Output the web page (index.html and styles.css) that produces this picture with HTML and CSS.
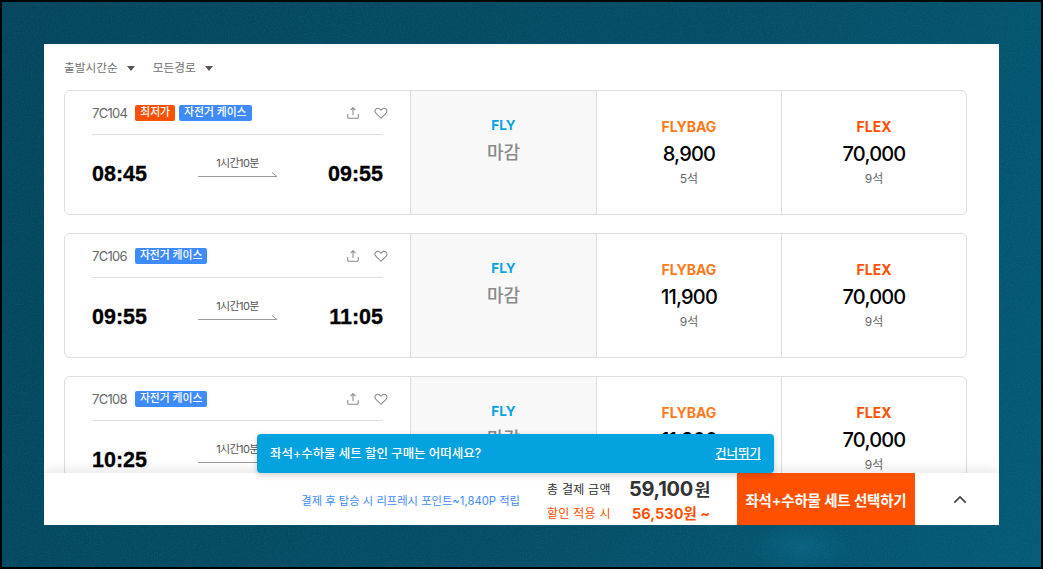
FILE: index.html
```html
<!DOCTYPE html>
<html lang="ko">
<head>
<meta charset="utf-8">
<title>항공편 선택</title>
<link rel="stylesheet" href="styles.css">
</head>
<body>
<div class="desktop">
  <svg class="texture" width="1043" height="569"><filter id="grain"><feTurbulence type="fractalNoise" baseFrequency="0.7 0.9" numOctaves="2" seed="4"/><feColorMatrix values="0 0 0 0 0.1  0 0 0 0 0.5  0 0 0 0 0.65  0 0 0 1.400 -0.55"/></filter><rect width="1043" height="569" filter="url(#grain)"/></svg>
  <main class="modal">
    <div class="filters">
      <span class="filter">출발시간순<i class="caret"></i></span>
      <span class="filter">모든경로<i class="caret"></i></span>
    </div>
    <div class="list">
      <article class="card">
        <section class="info">
          <div class="info-top">
            <span class="flight-no">7C104</span>
            <span class="tag tag-low">최저가</span>
            <span class="tag tag-bike">자전거 케이스</span>
            <span class="actions">
              <svg class="icon" viewBox="0 0 16 16"><path d="M8 10.5V2.200M5.200 4.800 8 2l2.800 2.800M2 9v4.200c0 .5.3.8.8.8h10.400c.5 0 .8-.3.8-.8V9"/></svg>
              <svg class="icon" viewBox="0 0 16 16"><path d="M8 14 2.300 8.300C.9 6.900.9 4.800 2.200 3.500c1.300-1.200 3.300-1.100 4.600.2L8 4.900l1.200-1.200c1.300-1.300 3.300-1.400 4.600-.2 1.300 1.300 1.300 3.400-.1 4.800L8 14Z"/></svg>
            </span>
          </div>
          <div class="times">
            <strong class="time">08:45</strong>
            <div class="route"><span class="duration">1시간10분</span><svg class="arrow" viewBox="0 0 80 5"><path d="M0 4.500H79L74 .5"/></svg></div>
            <strong class="time time-end">09:55</strong>
          </div>
        </section>
        <section class="fare fare-closed"><b class="fare-name name-fly">FLY</b><span class="closed">마감</span></section>
        <section class="fare"><b class="fare-name name-bag">FLYBAG</b><span class="price">8,900</span><span class="seats">5석</span></section>
        <section class="fare"><b class="fare-name name-flex">FLEX</b><span class="price">70,000</span><span class="seats">9석</span></section>
      </article>

      <article class="card">
        <section class="info">
          <div class="info-top">
            <span class="flight-no">7C106</span>
            <span class="tag tag-bike">자전거 케이스</span>
            <span class="actions">
              <svg class="icon" viewBox="0 0 16 16"><path d="M8 10.5V2.200M5.200 4.800 8 2l2.800 2.800M2 9v4.200c0 .5.3.8.8.8h10.400c.5 0 .8-.3.8-.8V9"/></svg>
              <svg class="icon" viewBox="0 0 16 16"><path d="M8 14 2.300 8.300C.9 6.900.9 4.800 2.200 3.500c1.300-1.200 3.300-1.100 4.600.2L8 4.900l1.200-1.200c1.300-1.300 3.300-1.400 4.600-.2 1.300 1.300 1.300 3.400-.1 4.800L8 14Z"/></svg>
            </span>
          </div>
          <div class="times">
            <strong class="time">09:55</strong>
            <div class="route"><span class="duration">1시간10분</span><svg class="arrow" viewBox="0 0 80 5"><path d="M0 4.500H79L74 .5"/></svg></div>
            <strong class="time time-end">11:05</strong>
          </div>
        </section>
        <section class="fare fare-closed"><b class="fare-name name-fly">FLY</b><span class="closed">마감</span></section>
        <section class="fare"><b class="fare-name name-bag">FLYBAG</b><span class="price">11,900</span><span class="seats">9석</span></section>
        <section class="fare"><b class="fare-name name-flex">FLEX</b><span class="price">70,000</span><span class="seats">9석</span></section>
      </article>

      <article class="card">
        <section class="info">
          <div class="info-top">
            <span class="flight-no">7C108</span>
            <span class="tag tag-bike">자전거 케이스</span>
            <span class="actions">
              <svg class="icon" viewBox="0 0 16 16"><path d="M8 10.5V2.200M5.200 4.800 8 2l2.800 2.800M2 9v4.200c0 .5.3.8.8.8h10.400c.5 0 .8-.3.8-.8V9"/></svg>
              <svg class="icon" viewBox="0 0 16 16"><path d="M8 14 2.300 8.300C.9 6.900.9 4.800 2.200 3.500c1.300-1.200 3.300-1.100 4.600.2L8 4.900l1.200-1.200c1.300-1.300 3.300-1.400 4.600-.2 1.300 1.300 1.300 3.400-.1 4.800L8 14Z"/></svg>
            </span>
          </div>
          <div class="times">
            <strong class="time">10:25</strong>
            <div class="route"><span class="duration">1시간10분</span><svg class="arrow" viewBox="0 0 80 5"><path d="M0 4.500H79L74 .5"/></svg></div>
            <strong class="time time-end">11:35</strong>
          </div>
        </section>
        <section class="fare fare-closed"><b class="fare-name name-fly">FLY</b><span class="closed">마감</span></section>
        <section class="fare"><b class="fare-name name-bag">FLYBAG</b><span class="price">11,900</span><span class="seats">9석</span></section>
        <section class="fare"><b class="fare-name name-flex">FLEX</b><span class="price">70,000</span><span class="seats">9석</span></section>
      </article>
    </div>
    <div class="toast">
      <span class="toast-text">좌석+수하물 세트 할인 구매는 어떠세요?</span>
      <a class="skip">건너뛰기</a>
    </div>
    <footer class="bar">
      <span class="points">결제 후 탑승 시 리프레시 포인트~1,840P 적립</span>
      <div class="totals">
        <div class="total-row"><span class="total-label">총 결제 금액</span><b class="total-price">59,100<small>원</small></b></div>
        <div class="total-row row-sale"><span class="total-label">할인 적용 시</span><b class="sale-price">56,530원 ~</b></div>
      </div>
      <button class="cta">좌석+수하물 세트 선택하기</button>
      <span class="chevron"><svg viewBox="0 0 16 10"><path d="M1.500 8.500 8 2l6.500 6.500"/></svg></span>
    </footer>
  </main>
</div>
</body>
</html>
```
FILE: styles.css
```css
* { box-sizing: border-box; }
html, body { margin: 0; height: 100%; }
body {
  font-family: Inter, "Noto Sans CJK KR", "Noto Sans", sans-serif;
  color: #000;
  background: #000;
  overflow: hidden;
}
.desktop {
  position: relative;
  width: 1043px;
  height: 569px;
  border: 2px solid #000;
  padding: 42px;
  background:
    radial-gradient(50px 24px at 800px 545px, #086280 0%, rgba(8, 98, 128, 0) 100%),
    linear-gradient(115deg, #04465d 0%, #054c65 55%, #055a76 100%);
  overflow: hidden;
}
.texture {
  position: absolute;
  left: -2px;
  top: -2px;
  opacity: .14;
}
.modal {
  position: relative;
  width: 955px;
  height: 481px;
  background: #fff;
  display: flex;
  flex-direction: column;
  overflow: hidden;
}
.filters {
  flex: none;
  height: 46px;
  padding: 16px 0 0 20px;
  display: flex;
  gap: 18px;
  font-size: 11.700px;
  line-height: 17px;
  color: #707070;
}
.filter { display: inline-flex; align-items: center; height: 17px; }
.caret {
  margin-left: 9px;
  width: 0;
  height: 0;
  border-left: 4px solid transparent;
  border-right: 4px solid transparent;
  border-top: 5px solid #555;
}
.list {
  flex: 1;
  min-height: 0;
  overflow: hidden;
  padding: 0 32px 0 20px;
  display: flex;
  flex-direction: column;
  gap: 18px;
}
.card {
  flex: none;
  height: 125px;
  border: 1px solid #ddd;
  border-radius: 6px;
  display: flex;
  overflow: hidden;
}
.info { width: 345px; padding: 0 27px; }
.info-top {
  height: 44px;
  display: flex;
  align-items: center;
  border-bottom: 1px solid #ddd;
}
.flight-no { font-size: 13px; letter-spacing: -.7px; color: #666; margin-right: 8px; }
.tag {
  height: 16px;
  padding: 0 5px;
  margin-right: 4px;
  border-radius: 2px;
  font-size: 10.800px;
  font-weight: 500;
  line-height: 16px;
  color: #fff;
}
.tag-low { background: #ff5000; }
.tag-bike { background: #3d8bff; }
.actions { margin-left: auto; margin-right: -5px; display: flex; gap: 14px; }
.icon { width: 14px; height: 14px; fill: none; stroke: #888; stroke-width: 1.200; }
.times {
  height: 78px;
  display: grid;
  grid-template-columns: 1fr 80px 1fr;
  align-items: center;
}
.time {
  font-family: "Liberation Sans", Inter, sans-serif;
  font-size: 21.500px;
  font-weight: 700;
  line-height: 26px;
  -webkit-text-stroke: .3px #000;
}
.time-end { text-align: right; }
.route { display: flex; flex-direction: column; align-items: center; margin-top: -16px; }
.duration { font-size: 11px; letter-spacing: -.6px; line-height: 14px; color: #555; margin-bottom: 2px; }
.arrow { display: block; width: 80px; height: 5px; fill: none; stroke: #999; stroke-width: 1; }
.fare {
  flex: 1;
  border-left: 1px solid #ddd;
  display: flex;
  flex-direction: column;
  align-items: center;
  padding-top: 27px;
}
.fare-closed { flex: none; width: 186px; background: #f8f8f8; padding-top: 25px; }
.fare-name { font-size: 14px; font-weight: 700; line-height: 18px; }
.name-fly { font-size: 13.500px; color: #05a4e0; }
.name-bag { color: #ff7a1a; }
.name-flex { color: #ff5000; }
.closed { margin-top: 7px; font-size: 18px; font-weight: 500; line-height: 24px; color: #8a8a8a; }
.price { margin-top: 5px; font-size: 20px; font-weight: 500; letter-spacing: -.8px; line-height: 26px; }
.seats { margin-top: 4px; font-size: 12px; line-height: 16px; color: #666; }
.toast {
  position: absolute;
  left: 213px;
  top: 390px;
  width: 517px;
  height: 39px;
  padding: 0 13px 2px;
  border-radius: 4px;
  background: #05a2e0;
  box-shadow: 0 2px 6px rgba(0, 0, 0, .2);
  display: flex;
  align-items: center;
  justify-content: space-between;
  font-weight: 500;
  color: #fff;
  z-index: 2;
}
.toast-text { font-size: 12.500px; letter-spacing: -.05px; }
.skip { font-size: 12.500px; text-decoration: underline; }
.bar {
  flex: none;
  position: relative;
  height: 52px;
  background: #fff;
  box-shadow: 0 -3px 12px rgba(0, 0, 0, .1);
  display: flex;
  align-items: stretch;
  justify-content: flex-end;
  z-index: 1;
}
.points { align-self: center; font-size: 11.300px; color: #3d8bff; margin: 2px 27px 0 0; white-space: nowrap; }
.totals { width: 190px; display: flex; flex-direction: column; padding-top: 2px; }
.total-row { height: 26px; display: flex; align-items: center; white-space: nowrap; }
.row-sale { height: 22px; }
.total-label { width: 82px; font-size: 12px; letter-spacing: .25px; color: #333; }
.row-sale .total-label { color: #ff5000; }
.total-price { font-size: 20px; font-weight: 700; letter-spacing: -.3px; color: #333; }
.total-price small { font-size: 17px; font-weight: 700; margin-left: 2px; }
.sale-price { margin-left: 3px; font-size: 14.500px; font-weight: 700; color: #ff5000; }
.cta {
  width: 178px;
  border: 0;
  padding: 0;
  background: #ff5000;
  color: #fff;
  font: 600 14.500px Inter, "Noto Sans CJK KR", sans-serif;
  letter-spacing: -.2px;
}
.chevron { width: 84px; display: flex; align-items: center; justify-content: center; padding-left: 6px; }
.chevron svg { width: 14px; height: 9px; fill: none; stroke: #444; stroke-width: 2; }
```
